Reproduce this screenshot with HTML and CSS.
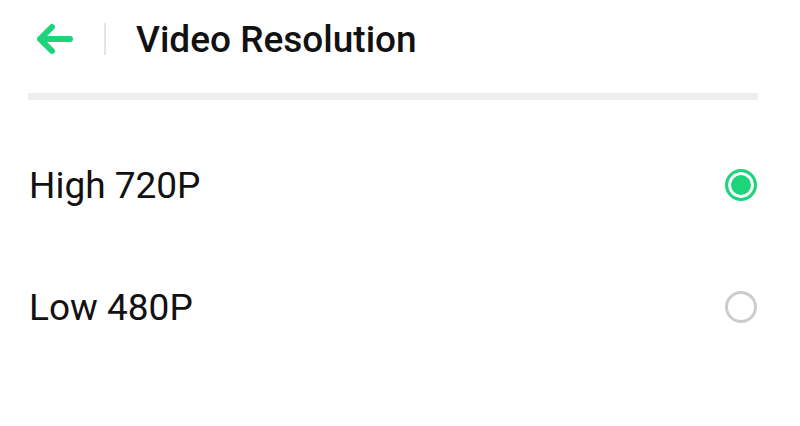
FILE: index.html
```html
<!DOCTYPE html>
<html>
<head>
<meta charset="utf-8">
<link rel="stylesheet" href="styles.css">
</head>
<body>
<div class="page">
  <header class="topbar">
    <button class="back" aria-label="Back">
      <svg width="40" height="32" viewBox="0 0 40 32"><path d="M36 16H6M18 4L6 16l12 12" fill="none" stroke="#1ed47a" stroke-width="6" stroke-linecap="round" stroke-linejoin="round"/></svg>
    </button>
    <span class="sep"></span>
    <h1 class="title">Video Resolution</h1>
  </header>
  <div class="divider"></div>
  <ul class="options">
    <li class="option">
      <span class="label">High 720P</span>
      <span class="radio checked"></span>
    </li>
    <li class="option">
      <span class="label">Low 480P</span>
      <span class="radio"></span>
    </li>
  </ul>
</div>
</body>
</html>
```
FILE: styles.css
```css
html, body { margin: 0; padding: 0; background: #fff; }
body { font-family: Roboto, "Noto Sans", sans-serif; color: #111; }
.page { width: 800px; height: 426px; overflow: hidden; }
.topbar { display: flex; align-items: center; height: 78px; padding-left: 33px; }
.back { border: 0; background: none; padding: 0; width: 42px; height: 34px; display: flex; align-items: center; justify-content: center; }
.sep { width: 2px; height: 32px; background: #e4e4e4; margin-left: 29px; }
.title { margin: 0 0 0 30px; font-size: 37px; font-weight: 500; color: #111; }
.divider { height: 7px; background: #eeeeee; margin: 15px 42px 0 28px; }
.options { list-style: none; margin: 0; padding: 0; }
.option { display: flex; align-items: center; justify-content: space-between; height: 122px; padding: 0 43px 0 29px; }
.option:first-child { margin-top: 24px; }
.label { font-size: 37px; color: #111; }
.radio { width: 26px; height: 26px; border: 3px solid #cccccc; border-radius: 50%; box-sizing: content-box; }
.radio.checked { border-color: #1ed47a; background: #1ed47a; box-shadow: inset 0 0 0 3px #fff; }
```
